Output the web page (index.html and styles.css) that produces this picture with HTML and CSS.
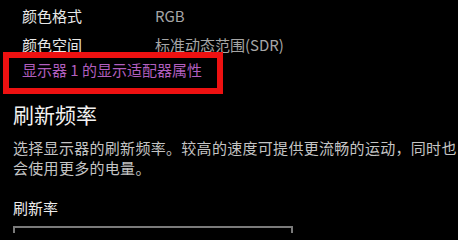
FILE: index.html
```html
<!DOCTYPE html>
<html lang="zh-CN">
<head>
<meta charset="utf-8">
<title>显示设置</title>
<link rel="stylesheet" href="styles.css">
</head>
<body>
<main class="page">
  <section class="details">
    <div class="row"><span class="label">颜色格式</span><span class="value">RGB</span></div>
    <div class="row"><span class="label">颜色空间</span><span class="value">标准动态范围(SDR)</span></div>
  </section>
  <div class="link-row">
    <a class="link" href="#">显示器 1 的显示适配器属性</a>
  </div>
  <h2 class="heading">刷新频率</h2>
  <p class="desc">选择显示器的刷新频率。较高的速度可提供更流畅的运动，同时也会使用更多的电量。</p>
  <div class="field-label">刷新率</div>
  <div class="select"></div>
</main>
</body>
</html>
```
FILE: styles.css
```css
html, body {
  margin: 0;
  padding: 0;
  background: #000;
}
body {
  font-family: "Noto Sans CJK SC", "Noto Sans", sans-serif;
  font-size: 15px;
  color: #e6e6e6;
  height: 233px;
  overflow: hidden;
}
.page {
  padding-left: 13px;
}
.details {
  padding-top: 1px;
  padding-left: 9px;
}
.row {
  display: flex;
  height: 29px;
  line-height: 29px;
}
.label {
  width: 133px;
  color: #e8e8e8;
}
.value {
  color: #a6a6a6;
}
.link-row {
  position: relative;
  height: 22px;
  line-height: 22px;
  padding-left: 9px;
}
.link-row::after {
  content: "";
  position: absolute;
  left: -10px;
  top: -7px;
  width: 220px;
  height: 42px;
  box-sizing: border-box;
  border: 6px solid #ee1111;
  pointer-events: none;
}
.link {
  color: #b15fbf;
  text-decoration: none;
}
.heading {
  margin: 18px 0 0;
  font-size: 21px;
  font-weight: normal;
  line-height: 30px;
  color: #f2f2f2;
}
.desc {
  margin: 9px 0 0;
  line-height: 20px;
  letter-spacing: 0.3px;
  color: #c4c4c4;
}
.field-label {
  margin-top: 20px;
  line-height: 20px;
  color: #ececec;
}
.select {
  margin-top: 8px;
  width: 280px;
  height: 32px;
  box-sizing: border-box;
  border: 2px solid #7a7a7a;
}
```
